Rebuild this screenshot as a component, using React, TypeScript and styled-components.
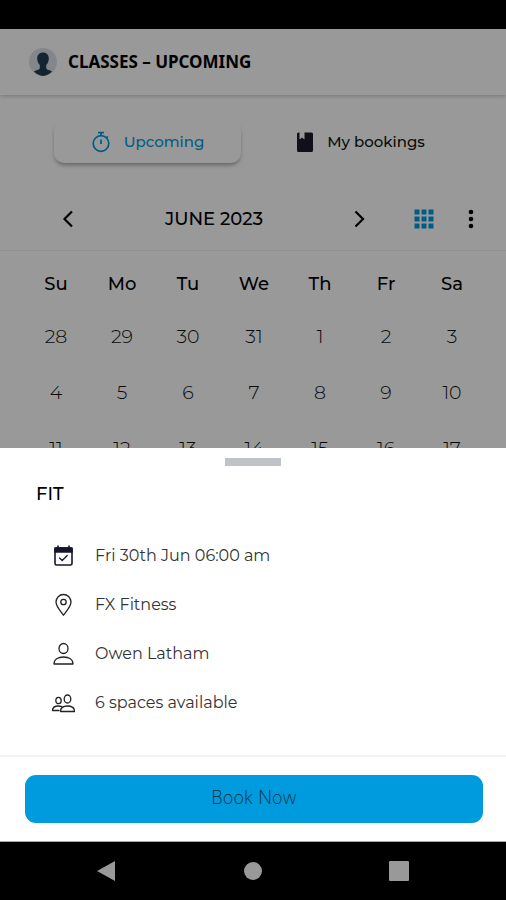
import React from "react";
import styled, { createGlobalStyle } from "styled-components";

const BLUE = "#009ade";
const FONT = '"Montserrat", "Inter", "Open Sans", sans-serif';

const GlobalStyle = createGlobalStyle`
  *, *::before, *::after { box-sizing: border-box; }
  body { margin: 0; background: #000; }
  button { border: 0; padding: 0; background: none; font: inherit; color: inherit; cursor: pointer; }
  svg { display: block; flex: none; }
`;

const Device = styled.div`
  height: 100vh;
  display: flex;
  flex-direction: column;
  background: #000;
  font-family: ${FONT};
  color: #000;
`;

const StatusBar = styled.div`
  height: 29px;
  flex: none;
`;

const Screen = styled.div`
  position: relative;
  flex: 1;
  min-height: 0;
  overflow: hidden;
  background: #fff;
`;

const Header = styled.header`
  display: flex;
  align-items: center;
  gap: 11px;
  height: 66px;
  padding: 0 29px;
  box-shadow: 0 1px 4px rgba(0, 0, 0, 0.24);
`;

const PageTitle = styled.h1`
  margin: 0;
  font-family: "Noto Sans", sans-serif;
  font-size: 17px;
  line-height: 24px;
  font-weight: 700;
`;

const Tabs = styled.div`
  display: grid;
  grid-template-columns: 187fr 239fr;
  padding: 26px 26px 0 54px;
`;

const Tab = styled.button<{ $active?: boolean }>`
  display: flex;
  align-items: center;
  justify-content: center;
  gap: 13px;
  height: 42px;
  border-radius: 10px;
  font-size: 15px;
  line-height: 24px;
  font-weight: 500;
  color: ${(p) => (p.$active ? BLUE : "#111")};
  box-shadow: ${(p) => (p.$active ? "0 3px 4px -1px rgba(0, 0, 0, 0.36)" : "none")};
`;

const MonthBar = styled.div`
  display: flex;
  align-items: center;
  justify-content: space-between;
  height: 63px;
  margin-top: 25px;
  padding: 0 23px 0 56px;
  border-bottom: 1px solid #eee;
`;

const MonthPicker = styled.div`
  display: flex;
  align-items: center;
  justify-content: space-between;
  flex: 0 0 74%;
`;

const MonthTitle = styled.h2`
  margin: 0;
  font-size: 18px;
  line-height: 24px;
  font-weight: 500;
`;

const MonthActions = styled.div`
  display: flex;
  align-items: center;
  gap: 23px;
`;

const IconButton = styled.button`
  display: flex;
  align-items: center;
  justify-content: center;
  width: 24px;
  height: 24px;
`;

const CalendarWrap = styled.div`
  padding: 8px 21px 0 23px;
`;

const Calendar = styled.table`
  width: 100%;
  table-layout: fixed;
  border-collapse: collapse;
  text-align: center;

  th {
    height: 50px;
    padding: 0;
    font-size: 18px;
    line-height: 24px;
    font-weight: 500;
  }

  td {
    height: 56px;
    padding: 0;
    font-size: 19px;
    line-height: 24px;
    font-weight: 300;
    color: #111;
  }
`;

const Scrim = styled.div`
  position: absolute;
  inset: 0;
  background: rgba(0, 0, 0, 0.4);
`;

const Sheet = styled.section`
  position: absolute;
  left: 0;
  right: 0;
  bottom: 0;
  padding-top: 10px;
  background: #fff;
  border-bottom: 1px solid #aaa;
`;

const Handle = styled.div`
  width: 56px;
  height: 8px;
  margin: 0 auto;
  background: #bfc3c7;
`;

const SheetTitle = styled.h2`
  margin: 16px 36px 0;
  font-size: 18px;
  line-height: 24px;
  font-weight: 500;
`;

const Details = styled.ul`
  margin: 25px 0 0;
  padding: 0 51px 28px;
  list-style: none;
`;

const Detail = styled.li`
  display: flex;
  align-items: center;
  gap: 20px;
  height: 49px;
  font-size: 16px;
  line-height: 24px;
  font-weight: 400;
  color: #333;
`;

const Footer = styled.div`
  padding: 18px 23px 18px 25px;
  border-top: 2px solid #f3f3f3;
`;

const BookButton = styled.button`
  display: block;
  width: 100%;
  height: 48px;
  padding-bottom: 2px;
  border-radius: 11px;
  background: ${BLUE};
  color: #0b2a3a;
  font-family: "Inter", sans-serif;
  font-size: 18px;
  line-height: 24px;
  font-weight: 200;
`;

const SystemNav = styled.nav`
  display: flex;
  align-items: center;
  justify-content: space-between;
  flex: none;
  height: 58px;
  padding: 0 95px 0 94px;
`;

const Avatar = () => (
  <svg width="28" height="28" viewBox="0 0 28 28" aria-hidden="true">
    <circle cx="14" cy="14" r="14" fill="#dbe1e9" />
    <path
      fill="#243d52"
      d="M14 4.500c-3.700 0-5.800 2.500-5.800 6 0 2.500.9 4.900 2.600 6.600v3c0 1.200-1.200 1.800-4.600 2.700l-1.200.8A13.900 13.900 0 0 0 14 28a13.900 13.900 0 0 0 9-4.400l-1.200-.8c-3.400-.9-4.600-1.500-4.600-2.700v-3c1.700-1.700 2.600-4.100 2.600-6.600 0-3.500-2.100-6-5.800-6z"
    />
  </svg>
);

const Stopwatch = () => (
  <svg width="20" height="22" viewBox="0 0 20 22" fill="none" stroke={BLUE} strokeWidth="1.700" aria-hidden="true">
    <circle cx="10" cy="12.500" r="7.800" />
    <path d="M7 1.600h6M10 2v3M10 8.500v4.500M15.300 6.800l1.500-1.500" />
  </svg>
);

const Book = () => (
  <svg width="18" height="22" viewBox="0 0 18 22" aria-hidden="true">
    <path fill="#1b1c2c" d="M2.200 1.500H3.500V8.500L6 6.500 8.500 8.500V1.500H15.500a1.500 1.500 0 0 1 1.500 1.500v16.500a1.500 1.500 0 0 1-1.500 1.500H2.500A1.500 1.500 0 0 1 1 19.500V3a1.500 1.500 0 0 1 1.200-1.500z" />
  </svg>
);

const Chevron = ({ next }: { next?: boolean }) => (
  <svg width="12" height="18" viewBox="0 0 12 18" fill="none" stroke="#000" strokeWidth="2.200" aria-hidden="true">
    <path d={next ? "M1.500 1.500 9 9 1.500 16.500" : "M10 1.500 2.500 9 10 16.500"} />
  </svg>
);

const GridIcon = () => (
  <svg width="20" height="20" viewBox="0 0 20 20" fill={BLUE} aria-hidden="true">
    {[0, 7, 14].map((y) => [0, 7, 14].map((x) => <rect key={`${x}-${y}`} x={x + 0.5} y={y + 0.5} width="5" height="5" />))}
  </svg>
);

const Dots = () => (
  <svg width="6" height="20" viewBox="0 0 6 20" aria-hidden="true">
    <circle cx="3" cy="3" r="2.300" />
    <circle cx="3" cy="10" r="2.300" />
    <circle cx="3" cy="17" r="2.300" />
  </svg>
);

const DetailIcon = ({ children }: { children: React.ReactNode }) => (
  <svg width="24" height="24" viewBox="0 0 24 24" fill="none" stroke="#222" strokeWidth="1.300" strokeLinejoin="round" strokeLinecap="round" aria-hidden="true">
    {children}
  </svg>
);

const details = [
  {
    text: "Fri 30th Jun 06:00 am",
    icon: (
      <g stroke="#15162e">
        <rect x="4" y="4" width="17" height="17" rx="1.500" strokeWidth="1.600" />
        <path d="M4 4h17v4H4zM7 2v3M18 2v3" fill="#15162e" strokeWidth="1.600" />
        <path d="m8.500 14 2.700 2.500 5-5" />
      </g>
    ),
  },
  {
    text: "FX Fitness",
    icon: (
      <>
        <path d="M12.500 22.200C9.500 18 5 13.500 5 9a7.500 7.500 0 0 1 15 0c0 4.500-4.500 9-7.500 13.200z" />
        <circle cx="12.500" cy="9" r="2.700" />
      </>
    ),
  },
  {
    text: "Owen Latham",
    icon: (
      <>
        <ellipse cx="12.500" cy="6.500" rx="4.500" ry="5" />
        <path d="M3 22c0-4.500 4-7 9.500-7s9.500 2.500 9.500 7z" />
      </>
    ),
  },
  {
    text: "6 spaces available",
    icon: (
      <>
        <ellipse cx="16.500" cy="8" rx="3.300" ry="4" />
        <path d="M9.500 20.500c0-3.500 3-5.500 7-5.500s7 2 7 5.500z" />
        <ellipse cx="7.500" cy="9.500" rx="2.700" ry="3.200" />
        <path d="M8 19.500H1.500c0-2.800 2.500-4.500 6-4.500 1.200 0 2.200.2 3.100.6" />
      </>
    ),
  },
];

const weekdays = ["Su", "Mo", "Tu", "We", "Th", "Fr", "Sa"];
const weeks = [
  [28, 29, 30, 31, 1, 2, 3],
  [4, 5, 6, 7, 8, 9, 10],
  [11, 12, 13, 14, 15, 16, 17],
];

export default function App() {
  return (
    <Device>
      <GlobalStyle />
      <StatusBar />
      <Screen>
        <Header>
          <Avatar />
          <PageTitle>CLASSES – UPCOMING</PageTitle>
        </Header>
        <Tabs>
          <Tab $active>
            <Stopwatch />
            Upcoming
          </Tab>
          <Tab>
            <Book />
            My bookings
          </Tab>
        </Tabs>
        <MonthBar>
          <MonthPicker>
            <IconButton aria-label="Previous month">
              <Chevron />
            </IconButton>
            <MonthTitle>JUNE 2023</MonthTitle>
            <IconButton aria-label="Next month">
              <Chevron next />
            </IconButton>
          </MonthPicker>
          <MonthActions>
            <IconButton aria-label="Grid view">
              <GridIcon />
            </IconButton>
            <IconButton aria-label="More options">
              <Dots />
            </IconButton>
          </MonthActions>
        </MonthBar>
        <CalendarWrap>
          <Calendar>
            <thead>
              <tr>
                {weekdays.map((d) => (
                  <th key={d} scope="col">{d}</th>
                ))}
              </tr>
            </thead>
            <tbody>
              {weeks.map((week) => (
                <tr key={week[0]}>
                  {week.map((day) => (
                    <td key={day}>{day}</td>
                  ))}
                </tr>
              ))}
            </tbody>
          </Calendar>
        </CalendarWrap>
        <Scrim />
        <Sheet>
          <Handle />
          <SheetTitle>FIT</SheetTitle>
          <Details>
            {details.map((d) => (
              <Detail key={d.text}>
                <DetailIcon>{d.icon}</DetailIcon>
                {d.text}
              </Detail>
            ))}
          </Details>
          <Footer>
            <BookButton>Book Now</BookButton>
          </Footer>
        </Sheet>
      </Screen>
      <SystemNav>
        <IconButton aria-label="Back">
          <svg width="20" height="22" viewBox="0 0 20 22" fill="#999">
            <path d="M1 11 19 1v20z" />
          </svg>
        </IconButton>
        <IconButton aria-label="Home">
          <svg width="18" height="18" viewBox="0 0 18 18" fill="#999">
            <circle cx="9" cy="9" r="9" />
          </svg>
        </IconButton>
        <IconButton aria-label="Recent apps">
          <svg width="20" height="20" viewBox="0 0 20 20" fill="#999">
            <rect width="20" height="20" rx="1" />
          </svg>
        </IconButton>
      </SystemNav>
    </Device>
  );
}
